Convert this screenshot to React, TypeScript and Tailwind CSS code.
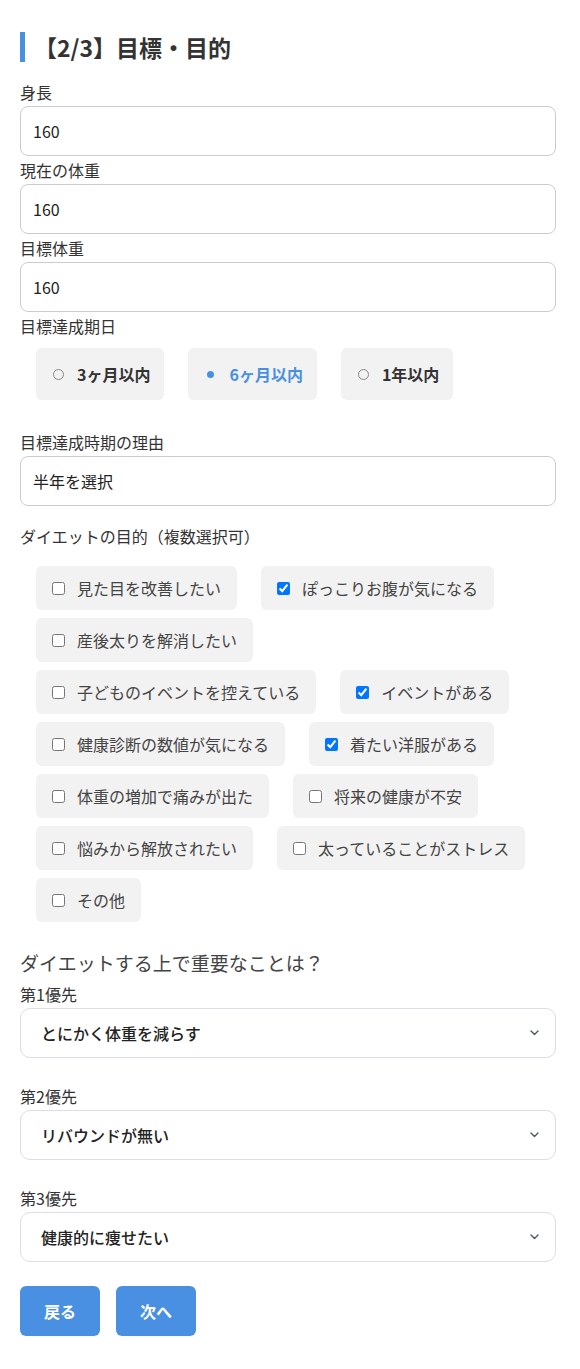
import React from 'react';

const textFields = [
  { label: '身長', value: '160' },
  { label: '現在の体重', value: '160' },
  { label: '目標体重', value: '160' },
];

const periods = [
  { label: '3ヶ月以内', checked: false },
  { label: '6ヶ月以内', checked: true },
  { label: '1年以内', checked: false },
];

// rows as they wrap in the original layout
const purposeRows = [
  [
    { label: '見た目を改善したい', checked: false },
    { label: 'ぽっこりお腹が気になる', checked: true },
  ],
  [{ label: '産後太りを解消したい', checked: false }],
  [
    { label: '子どものイベントを控えている', checked: false },
    { label: 'イベントがある', checked: true },
  ],
  [
    { label: '健康診断の数値が気になる', checked: false },
    { label: '着たい洋服がある', checked: true },
  ],
  [
    { label: '体重の増加で痛みが出た', checked: false },
    { label: '将来の健康が不安', checked: false },
  ],
  [
    { label: '悩みから解放されたい', checked: false },
    { label: '太っていることがストレス', checked: false },
  ],
  [{ label: 'その他', checked: false }],
];

const priorities = [
  { label: '第1優先', value: 'とにかく体重を減らす' },
  { label: '第2優先', value: 'リバウンドが無い' },
  { label: '第3優先', value: '健康的に痩せたい' },
];

function Label({ children }: { children: React.ReactNode }) {
  return <div className="text-base leading-6 text-[#333] mb-0.5">{children}</div>;
}

function Chevron() {
  return (
    <svg width="9" height="6" viewBox="0 0 9 6" fill="none">
      <path d="M1 1l3.5 3.5L8 1" stroke="#4b5563" strokeWidth="1.4" strokeLinecap="round" strokeLinejoin="round" />
    </svg>
  );
}

function App() {
  return (
    <div className="min-h-screen w-full bg-white pl-5 pr-6 pt-8 pb-[33px] font-['Noto_Sans_CJK_JP','Noto_Sans',sans-serif]">
      {/* title */}
      <h1 className="border-l-[5px] border-[#4a90e2] pl-[9px] text-[23px] leading-[30px] font-bold text-[#333] mb-[18px]">
        【2/3】目標・目的
      </h1>

      {/* number inputs */}
      {textFields.map((f) => (
        <div key={f.label} className="mb-0.5">
          <Label>{f.label}</Label>
          <input
            readOnly
            value={f.value}
            className="block w-full h-[50px] rounded-lg border border-[#ccc] px-3 text-base text-[#222] outline-none"
          />
        </div>
      ))}

      {/* target date */}
      <Label>目標達成期日</Label>
      <div className="flex gap-6 ml-4 mt-2.5 mb-[30px]">
        {periods.map((p) => (
          <div key={p.label} className="flex items-center bg-[#f2f2f2] rounded-md pl-[17px] pr-[14px] py-[14px]">
            <span className="w-[11px] h-[11px] flex items-center justify-center">
              {p.checked ? (
                <span className="w-[7px] h-[7px] rounded-full bg-[#4a90e2]" />
              ) : (
                <span className="w-[11px] h-[11px] rounded-full border border-[#8a8a8a]" />
              )}
            </span>
            <span className={`ml-[13px] text-base leading-6 font-bold ${p.checked ? 'text-[#4a90e2]' : 'text-[#333]'}`}>
              {p.label}
            </span>
          </div>
        ))}
      </div>

      <Label>目標達成時期の理由</Label>
      <input
        readOnly
        value="半年を選択"
        className="block w-full h-[50px] rounded-lg border border-[#ccc] px-3 text-base text-[#222] outline-none"
      />

      {/* purposes */}
      <div className="mt-[18px] text-base leading-6 text-[#333]">ダイエットの目的（複数選択可）</div>
      <div className="flex flex-col gap-2 pl-4 mt-[18px]">
        {purposeRows.map((row, i) => (
          <div key={i} className="flex gap-6">
            {row.map((item) => (
              <label key={item.label} className="flex items-center bg-[#f2f2f2] rounded-md pl-4 pr-4 py-2.5">
                <input type="checkbox" readOnly checked={item.checked} className="m-0 w-[13px] h-[13px]" />
                <span className="ml-3 text-base leading-6 text-[#444]">{item.label}</span>
              </label>
            ))}
          </div>
        ))}
      </div>

      {/* priorities */}
      <h2 className="mt-[27px] text-[19px] leading-[28px] text-[#444]">ダイエットする上で重要なことは？</h2>
      <div className="mt-[5px] flex flex-col gap-[26px]">
        {priorities.map((p) => (
          <div key={p.label}>
            <Label>{p.label}</Label>
            <div className="flex items-center justify-between h-[50px] rounded-[10px] border border-[#dddde3] pl-5 pr-4">
              <span className="text-base font-medium text-[#222]">{p.value}</span>
              <Chevron />
            </div>
          </div>
        ))}
      </div>

      {/* buttons */}
      <div className="flex gap-4 mt-6">
        <button className="w-20 h-[50px] rounded-md bg-[#4a90e2] text-white text-base font-bold">戻る</button>
        <button className="w-20 h-[50px] rounded-md bg-[#4a90e2] text-white text-base font-bold">次へ</button>
      </div>
    </div>
  );
}

export default App;
